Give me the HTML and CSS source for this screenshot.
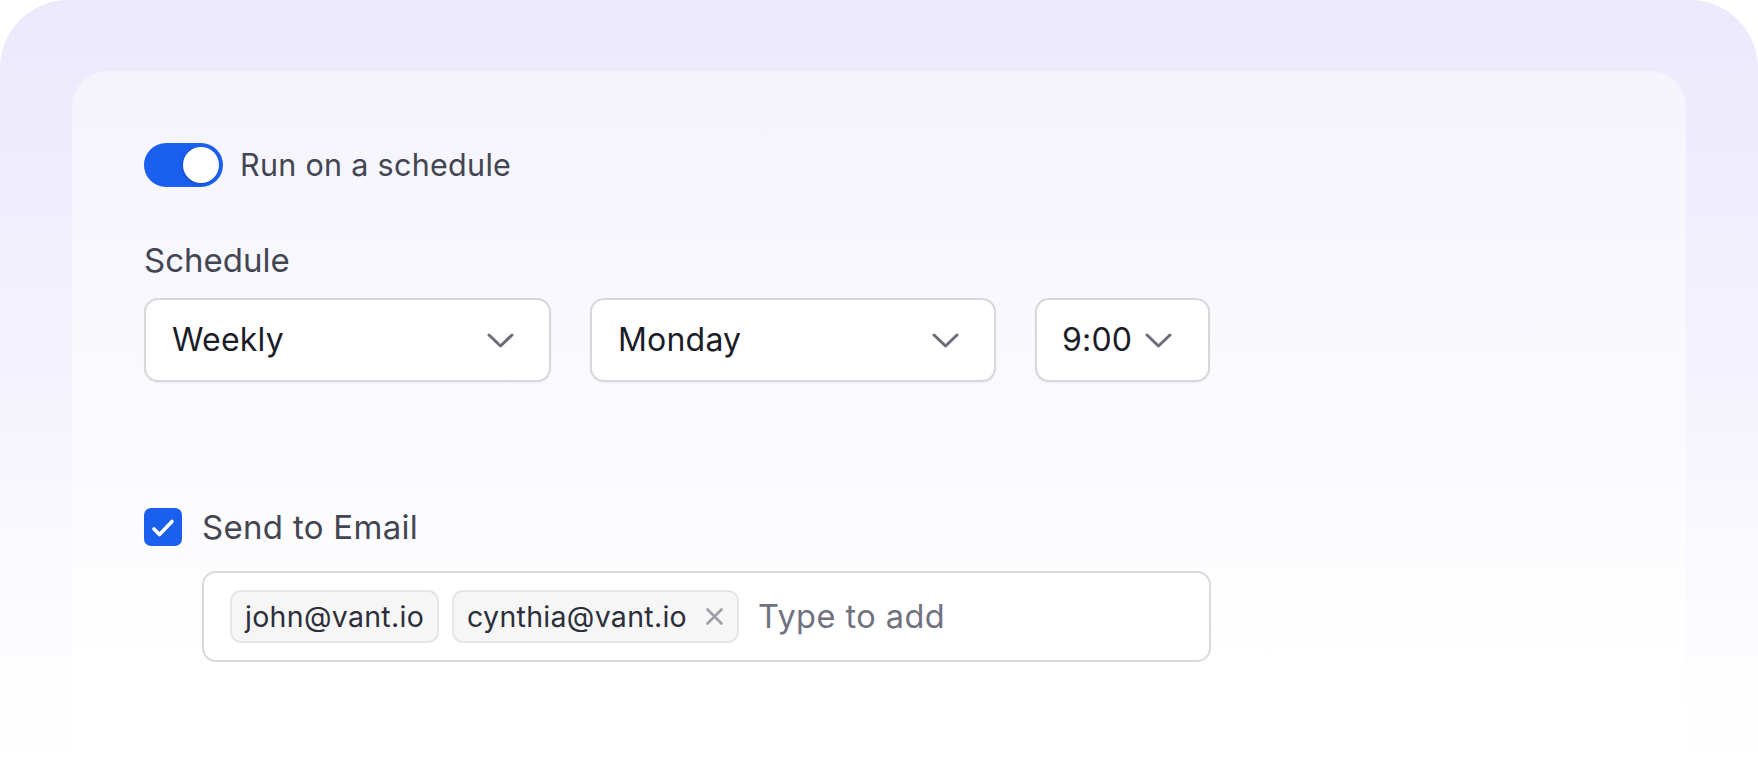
FILE: index.html
```html
<!DOCTYPE html>
<html lang="en">
<head>
<meta charset="utf-8">
<title>Schedule settings</title>
<link rel="stylesheet" href="styles.css">
</head>
<body>
<div class="frame">
  <div class="card">
    <div class="toggle-row">
      <span class="toggle"><span class="knob"></span></span>
      <span class="toggle-label">Run on a schedule</span>
    </div>

    <div class="field-label">Schedule</div>
    <div class="selects">
      <div class="select select-wide">
        <span class="select-value">Weekly</span>
        <svg class="chevron" width="27" height="15" viewBox="0 0 27 15"><path d="M2 2 L13.5 13 L25 2" fill="none" stroke="#6b6d78" stroke-width="3" stroke-linecap="round" stroke-linejoin="round"/></svg>
      </div>
      <div class="select select-wide select-mid">
        <span class="select-value">Monday</span>
        <svg class="chevron" width="27" height="15" viewBox="0 0 27 15"><path d="M2 2 L13.5 13 L25 2" fill="none" stroke="#6b6d78" stroke-width="3" stroke-linecap="round" stroke-linejoin="round"/></svg>
      </div>
      <div class="select select-time">
        <span class="select-value">9:00</span>
        <svg class="chevron" width="27" height="15" viewBox="0 0 27 15"><path d="M2 2 L13.5 13 L25 2" fill="none" stroke="#6b6d78" stroke-width="3" stroke-linecap="round" stroke-linejoin="round"/></svg>
      </div>
    </div>

    <div class="check-row">
      <span class="checkbox">
        <svg width="38" height="38" viewBox="0 0 38 38"><path d="M10 21 L15.5 26.5 L28 13.5" fill="none" stroke="#ffffff" stroke-width="3.6" stroke-linecap="round" stroke-linejoin="round"/></svg>
      </span>
      <span class="check-label">Send to Email</span>
    </div>

    <div class="email-box">
      <span class="chip">john@vant.io</span>
      <span class="chip chip-removable">cynthia@vant.io
        <svg class="chip-x" width="19" height="19" viewBox="0 0 19 19"><path d="M2.5 2.5 L16.5 16.5 M16.5 2.5 L2.5 16.5" fill="none" stroke="#9c9da6" stroke-width="2.6" stroke-linecap="round"/></svg>
      </span>
      <span class="placeholder">Type to add</span>
    </div>
  </div>
</div>
</body>
</html>
```
FILE: styles.css
```css
html, body {
  margin: 0;
  padding: 0;
  background: #ffffff;
}

body {
  width: 1758px;
  height: 771px;
  overflow: hidden;
  font-family: "Inter", "Noto Sans", sans-serif;
}

.frame {
  box-sizing: border-box;
  width: 1758px;
  height: 771px;
  padding: 71px 72px 0 72px;
  border-radius: 68px 68px 0 0;
  background: linear-gradient(to bottom, #ebe9fc 0%, #f3f2fd 45%, #fdfdff 85%, #ffffff 100%);
}

.card {
  box-sizing: border-box;
  height: 100%;
  padding: 72px 72px 0 72px;
  border-radius: 36px 36px 0 0;
  background: linear-gradient(to bottom, #f5f4fd 0%, #f9f9fe 45%, #ffffff 85%);
}

.toggle-row {
  display: flex;
  align-items: center;
  gap: 17px;
  height: 44px;
}

.toggle {
  box-sizing: border-box;
  display: flex;
  justify-content: flex-end;
  align-items: center;
  width: 79px;
  height: 44px;
  padding: 0 4px;
  border-radius: 22px;
  background: #1b5fee;
}

.knob {
  width: 36px;
  height: 36px;
  border-radius: 50%;
  background: #ffffff;
  box-shadow: -1px 1px 3px rgba(10, 30, 90, 0.25);
}

.toggle-label {
  font-size: 30.5px;
  letter-spacing: 0.3px;
  line-height: 40px;
  color: #434652;
}

.field-label {
  margin-top: 53px;
  font-size: 33px;
  line-height: 40px;
  color: #434652;
}

.selects {
  display: flex;
  gap: 39px;
  margin-top: 18px;
}

.select {
  box-sizing: border-box;
  display: flex;
  align-items: center;
  height: 84px;
  padding: 0 35px 0 26px;
  border: 2px solid #d7d7dc;
  border-radius: 14px;
  background: #ffffff;
  box-shadow: 0 1px 2px rgba(20, 20, 40, 0.05);
}

.select-wide {
  width: 407px;
  justify-content: space-between;
}

.select-mid {
  width: 406px;
}

.select-time {
  width: 175px;
  gap: 13px;
  padding-left: 25px;
}

.select-value {
  font-size: 32px;
  letter-spacing: 0.2px;
  line-height: 40px;
  color: #1a1d28;
}

.chevron {
  flex: none;
  display: block;
}

.check-row {
  display: flex;
  align-items: center;
  gap: 20px;
  margin-top: 126px;
  height: 38px;
}

.checkbox {
  display: block;
  width: 38px;
  height: 38px;
  border-radius: 7px;
  background: #1b5fee;
}

.checkbox svg {
  display: block;
}

.check-label {
  font-size: 33px;
  letter-spacing: 0.3px;
  line-height: 40px;
  color: #434652;
}

.email-box {
  box-sizing: border-box;
  display: flex;
  align-items: center;
  gap: 13px;
  width: 1009px;
  height: 91px;
  margin: 25px 0 0 58px;
  padding: 0 26px;
  border: 2px solid #d9d9de;
  border-radius: 14px;
  background: #ffffff;
}

.chip {
  box-sizing: border-box;
  display: flex;
  align-items: center;
  gap: 15px;
  height: 53px;
  padding: 0 13px;
  border: 2px solid #e6e6ea;
  border-radius: 11px;
  background: #f6f6f7;
  font-size: 28.5px;
  letter-spacing: 0.3px;
  line-height: 36px;
  color: #2c2f3a;
}

.chip-removable {
  gap: 18px;
}

.chip-x {
  display: block;
  flex: none;
}

.placeholder {
  margin-left: 6px;
  font-size: 32.5px;
  letter-spacing: 0.45px;
  line-height: 40px;
  color: #70737f;
}
```
